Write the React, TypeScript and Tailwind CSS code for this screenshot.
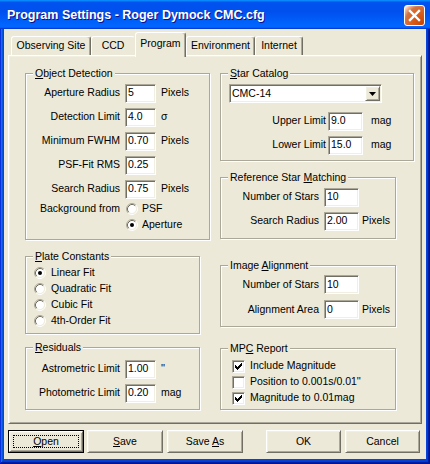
import React from "react";

const sunken =
  "border border-t-[#ACA899] border-l-[#ACA899] border-b-white border-r-white shadow-[inset_1px_1px_#716F64,inset_-1px_-1px_#F1EFE2] bg-white";
const raised =
  "border border-t-white border-l-white border-b-[#716F64] border-r-[#716F64] shadow-[inset_1px_1px_#F1EFE2,inset_-1px_-1px_#ACA899] bg-[#ECE9D8]";

function U({ children }: { children: React.ReactNode }) {
  return <span className="underline">{children}</span>;
}

function Group({
  label,
  className,
  children,
}: {
  label: React.ReactNode;
  className: string;
  children: React.ReactNode;
}) {
  return (
    <div
      className={`relative shrink-0 border border-[#ACA899] shadow-[inset_1px_1px_#fff,1px_1px_#fff] ${className}`}
    >
      <span className="absolute left-[7px] top-[-8px] px-[2px] bg-[#ECE9D8] leading-[14px] whitespace-nowrap">
        {label}
      </span>
      {children}
    </div>
  );
}

function Row({
  label,
  value,
  unit,
  lw,
  iml,
  iw,
  uml,
  h,
}: {
  label: string;
  value: string;
  unit?: string;
  lw: string;
  iml: string;
  iw: string;
  uml?: string;
  h: string;
}) {
  return (
    <div className={`flex items-center ${h}`}>
      <div className={`${lw} shrink-0 text-right whitespace-nowrap`}>{label}</div>
      <div className={`${iml} ${iw} shrink-0 h-[19px] ${sunken} flex items-center pl-[2px]`}>
        {value}
      </div>
      {unit && <div className={`${uml} whitespace-nowrap`}>{unit}</div>}
    </div>
  );
}

function Radio({ checked }: { checked?: boolean }) {
  return (
    <svg width="12" height="12" viewBox="0 0 12 12" className="shrink-0 block">
      <circle cx="6" cy="6" r="4.2" fill="#fff" />
      <path d="M2.11 9.89A5.5 5.5 0 0 1 9.89 2.11" stroke="#ACA899" fill="none" />
      <path d="M9.89 2.11A5.5 5.5 0 0 1 2.11 9.89" stroke="#fff" fill="none" />
      <path d="M2.82 9.18A4.5 4.5 0 0 1 9.18 2.82" stroke="#716F64" fill="none" />
      <path d="M9.18 2.82A4.5 4.5 0 0 1 2.82 9.18" stroke="#F1EFE2" fill="none" />
      {checked && <circle cx="6" cy="6" r="2" fill="#000" />}
    </svg>
  );
}

function Check({ checked }: { checked?: boolean }) {
  const ys = [2, 3, 4, 3, 2, 1, 0];
  return (
    <div className={`${sunken} w-[13px] h-[13px] shrink-0 flex items-center justify-center`}>
      {checked && (
        <svg width="7" height="7" viewBox="0 0 7 7" className="block">
          {ys.map((y, i) => (
            <rect key={i} x={i} y={y} width="1" height="3" fill="#000" />
          ))}
        </svg>
      )}
    </div>
  );
}

function Tab({
  children,
  w,
  selected,
  hideRight,
}: {
  children: React.ReactNode;
  w: string;
  selected?: boolean;
  hideRight?: boolean;
}) {
  if (selected) {
    return (
      <div
        className={`${w} h-[25px] -mb-[2px] pb-[2px] relative z-10 flex items-center justify-center bg-[#ECE9D8] border-l border-t border-r border-l-white border-t-white border-r-[#716F64] shadow-[inset_-1px_0_#ACA899] rounded-t-[3px]`}
      >
        {children}
      </div>
    );
  }
  return (
    <div
      className={`${w} h-[19px] flex items-center justify-center bg-[#ECE9D8] border-l border-t border-r border-l-white border-t-white rounded-t-[3px] ${
        hideRight ? "border-r-[#ECE9D8]" : "border-r-[#716F64] shadow-[inset_-1px_0_#ACA899]"
      }`}
    >
      {children}
    </div>
  );
}

function Btn({ children, cls, def }: { children: React.ReactNode; cls: string; def?: boolean }) {
  if (def) {
    return (
      <div className={`${cls} h-[23px] border border-black`}>
        <div className={`${raised} relative w-full h-full flex items-center justify-center`}>
          <span className="absolute inset-[3px] border border-dotted border-black" />
          {children}
        </div>
      </div>
    );
  }
  return <div className={`${cls} h-[23px] ${raised} flex items-center justify-center`}>{children}</div>;
}

export default function App() {
  return (
    <div className="w-[430px] h-[464px] flex flex-col bg-[#0842D9] shadow-[inset_-1px_-1px_#00138c,inset_1px_1px_#0831d9,inset_-2px_-2px_#001ea0,inset_2px_2px_#166aee,inset_-3px_-3px_#003bda,inset_3px_3px_#0855dd] font-['Liberation_Sans',Arial,sans-serif] text-[10.5px] text-black select-none">
      {/* Title bar */}
      <div className="h-[29px] shrink-0 flex items-start pl-[7px] pr-[5px] bg-[linear-gradient(180deg,#0997ff,#0053ee_8%,#0050ee_40%,#06f_88%,#06f_93%,#005bff_95%,#003dd7_96%,#003dd7)]">
        <span className="flex-1 self-center text-white font-bold text-[12.5px] leading-[16px] [text-shadow:1px_1px_#0F1089] whitespace-nowrap">
          Program Settings - Roger Dymock CMC.cfg
        </span>
        <div className="mt-[5px] w-[21px] h-[21px] rounded-[3px] border border-white bg-[radial-gradient(circle_at_90%_90%,#cc4600_0%,#dc6527_55%,#cd7546_70%,#ffccb2_90%,#fff_100%)] flex items-center justify-center">
          <svg width="19" height="19" viewBox="0 0 19 19" className="block">
            <path d="M5 5L14 14M14 5L5 14" stroke="#fff" strokeWidth="2.4" strokeLinecap="square" />
          </svg>
        </div>
      </div>

      {/* Client area */}
      <div className="flex-1 mx-[4px] mb-[5px] bg-[#ECE9D8] flex flex-col">
        <div className="pt-[3px] pl-[4px]">
          <div className="h-[23px] flex items-end pl-[3px]">
            <Tab w="w-[80px]">Observing Site</Tab>
            <Tab w="w-[44px]" hideRight>
              CCD
            </Tab>
            <Tab w="w-[51px]" selected>
              Program
            </Tab>
            <Tab w="w-[69px]">Environment</Tab>
            <Tab w="w-[48px]">Internet</Tab>
          </div>

          {/* Tab panel */}
          <div className="w-[414px] h-[369px] border border-t-white border-l-white border-r-[#716F64] border-b-[#716F64] shadow-[inset_1px_1px_#F1EFE2,inset_-1px_-1px_#ACA899] flex items-start pt-[17px] pl-[16px]">
            {/* Left column */}
            <div className="flex flex-col w-[185px] shrink-0">
              <Group
                label={
                  <>
                    <U>O</U>bject Detection
                  </>
                }
                className="w-[185px] h-[167px] pt-[7px]"
              >
                <Row h="h-[24px]" lw="w-[94px]" iml="ml-[5px]" iw="w-[31px]" uml="ml-[5px]" label="Aperture Radius" value="5" unit="Pixels" />
                <Row h="h-[24px]" lw="w-[94px]" iml="ml-[5px]" iw="w-[31px]" uml="ml-[5px]" label="Detection Limit" value="4.0" unit="σ" />
                <Row h="h-[24px]" lw="w-[94px]" iml="ml-[5px]" iw="w-[31px]" uml="ml-[5px]" label="Minimum FWHM" value="0.70" unit="Pixels" />
                <Row h="h-[24px]" lw="w-[94px]" iml="ml-[5px]" iw="w-[31px]" uml="ml-[5px]" label="PSF-Fit RMS" value="0.25" />
                <Row h="h-[24px]" lw="w-[94px]" iml="ml-[5px]" iw="w-[31px]" uml="ml-[5px]" label="Search Radius" value="0.75" unit="Pixels" />
                <div className="flex items-center h-[16px]">
                  <div className="w-[94px] shrink-0 text-right whitespace-nowrap">Background from</div>
                  <div className="ml-[6px]">
                    <Radio />
                  </div>
                  <span className="ml-[4px]">PSF</span>
                </div>
                <div className="flex items-center h-[16px]">
                  <div className="w-[94px] shrink-0" />
                  <div className="ml-[6px]">
                    <Radio checked />
                  </div>
                  <span className="ml-[4px]">Aperture</span>
                </div>
              </Group>

              <Group
                label={
                  <>
                    <U>P</U>late Constants
                  </>
                }
                className="w-[175px] h-[78px] mt-[16px] pt-[8px]"
              >
                {["Linear Fit", "Quadratic Fit", "Cubic Fit", "4th-Order Fit"].map((t, i) => (
                  <div key={t} className="flex items-center h-[16px]">
                    <div className="ml-[8px]">
                      <Radio checked={i === 0} />
                    </div>
                    <span className="ml-[5px]">{t}</span>
                  </div>
                ))}
              </Group>

              <Group
                label={
                  <>
                    <U>R</U>esiduals
                  </>
                }
                className="w-[175px] h-[63px] mt-[13px] pt-[9px]"
              >
                <Row h="h-[24px]" lw="w-[94px]" iml="ml-[5px]" iw="w-[31px]" uml="ml-[5px]" label="Astrometric Limit" value="1.00" unit="''" />
                <Row h="h-[24px]" lw="w-[94px]" iml="ml-[5px]" iw="w-[31px]" uml="ml-[5px]" label="Photometric Limit" value="0.20" unit="mag" />
              </Group>
            </div>

            {/* Right column */}
            <div className="flex flex-col ml-[10px]">
              <Group
                label={
                  <>
                    <U>S</U>tar Catalog
                  </>
                }
                className="w-[194px] h-[88px] pt-[10px]"
              >
                <div className={`${sunken} ml-[8px] w-[153px] h-[19px] p-[1px] flex items-center`}>
                  <span className="flex-1 pl-[1px]">CMC-14</span>
                  <div className={`${raised} w-[15px] h-full flex items-center justify-center`}>
                    <svg width="7" height="4" viewBox="0 0 7 4" className="block">
                      <polygon points="0,0 7,0 3.5,4" fill="#000" />
                    </svg>
                  </div>
                </div>
                <div className="mt-[6px]">
                  <Row h="h-[24px]" lw="w-[105px]" iml="ml-[2px]" iw="w-[35px]" uml="ml-[8px]" label="Upper Limit" value="9.0" unit="mag" />
                  <Row h="h-[24px]" lw="w-[105px]" iml="ml-[2px]" iw="w-[35px]" uml="ml-[8px]" label="Lower Limit" value="15.0" unit="mag" />
                </div>
              </Group>

              <Group
                label={
                  <>
                    Reference Star <U>M</U>atching
                  </>
                }
                className="w-[176px] h-[62px] mt-[16px] pt-[7px]"
              >
                <Row h="h-[24px]" lw="w-[98px]" iml="ml-[5px]" iw="w-[35px]" uml="ml-[3px]" label="Number of Stars" value="10" />
                <Row h="h-[24px]" lw="w-[98px]" iml="ml-[5px]" iw="w-[35px]" uml="ml-[3px]" label="Search Radius" value="2.00" unit="Pixels" />
              </Group>

              <Group
                label={
                  <>
                    Image <U>A</U>lignment
                  </>
                }
                className="w-[176px] h-[62px] mt-[26px] pt-[6px]"
              >
                <Row h="h-[25px]" lw="w-[98px]" iml="ml-[5px]" iw="w-[35px]" uml="ml-[3px]" label="Number of Stars" value="10" />
                <Row h="h-[25px]" lw="w-[98px]" iml="ml-[5px]" iw="w-[35px]" uml="ml-[3px]" label="Alignment Area" value="0" unit="Pixels" />
              </Group>

              <Group
                label={
                  <>
                    MP<U>C</U> Report
                  </>
                }
                className="w-[176px] h-[62px] mt-[21px] pt-[9px]"
              >
                {[
                  ["Include Magnitude", true],
                  ["Position to 0.001s/0.01''", false],
                  ["Magnitude to 0.01mag", true],
                ].map(([t, c]) => (
                  <div key={t as string} className="flex items-center h-[16px]">
                    <div className="ml-[11px]">
                      <Check checked={c as boolean} />
                    </div>
                    <span className="ml-[5px] whitespace-nowrap">{t as string}</span>
                  </div>
                ))}
              </Group>
            </div>
          </div>
        </div>

        {/* Buttons */}
        <div className="flex mt-[6px]">
          <Btn cls="ml-[4px] w-[76px]" def>
            <span>
              <U>O</U>pen
            </span>
          </Btn>
          <Btn cls="ml-[3px] w-[76px]">
            <span>
              <U>S</U>ave
            </span>
          </Btn>
          <Btn cls="ml-[4px] w-[76px]">
            <span>
              Save <U>A</U>s
            </span>
          </Btn>
          <Btn cls="ml-[23px] w-[75px]">OK</Btn>
          <Btn cls="ml-[4px] w-[75px]">Cancel</Btn>
        </div>
      </div>
    </div>
  );
}
